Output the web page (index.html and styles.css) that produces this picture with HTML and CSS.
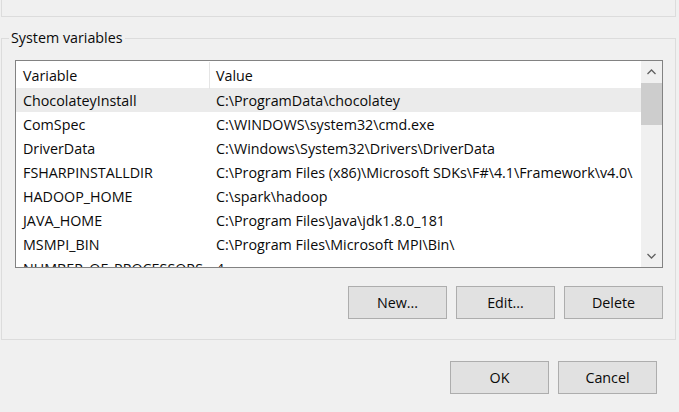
FILE: index.html
```html
<!DOCTYPE html>
<html>
<head>
<meta charset="utf-8">
<link rel="stylesheet" href="styles.css">
</head>
<body>
<div class="top-group"></div>
<div class="sys-group">
  <div class="legend">System variables</div>
  <div class="list">
    <div class="list-main">
      <div class="row header">
        <div class="c1">Variable</div>
        <div class="c2 hdr-value">Value</div>
      </div>
      <div class="row selected"><div class="c1">ChocolateyInstall</div><div class="c2">C:\ProgramData\chocolatey</div></div>
      <div class="row"><div class="c1">ComSpec</div><div class="c2">C:\WINDOWS\system32\cmd.exe</div></div>
      <div class="row"><div class="c1">DriverData</div><div class="c2">C:\Windows\System32\Drivers\DriverData</div></div>
      <div class="row"><div class="c1">FSHARPINSTALLDIR</div><div class="c2">C:\Program Files (x86)\Microsoft SDKs\F#\4.1\Framework\v4.0\</div></div>
      <div class="row"><div class="c1">HADOOP_HOME</div><div class="c2">C:\spark\hadoop</div></div>
      <div class="row"><div class="c1">JAVA_HOME</div><div class="c2">C:\Program Files\Java\jdk1.8.0_181</div></div>
      <div class="row"><div class="c1">MSMPI_BIN</div><div class="c2">C:\Program Files\Microsoft MPI\Bin\</div></div>
      <div class="row"><div class="c1">NUMBER_OF_PROCESSORS</div><div class="c2">4</div></div>
    </div>
    <div class="scrollbar">
      <div class="arrow"><svg width="9" height="6" viewBox="0 0 9 6"><polyline points="0.5,5 4.5,1 8.5,5" fill="none" stroke="#606060" stroke-width="1.3"/></svg></div>
      <div class="track"><div class="thumb"></div></div>
      <div class="arrow"><svg width="9" height="6" viewBox="0 0 9 6"><polyline points="0.5,1 4.5,5 8.5,1" fill="none" stroke="#606060" stroke-width="1.3"/></svg></div>
    </div>
  </div>
  <div class="btn-row">
    <button class="btn">New...</button>
    <button class="btn">Edit...</button>
    <button class="btn">Delete</button>
  </div>
</div>
<div class="dlg-row">
  <button class="btn">OK</button>
  <button class="btn">Cancel</button>
</div>
</body>
</html>
```
FILE: styles.css
```css
html, body {
  margin: 0;
  padding: 0;
  background: #f0f0f0;
  font-family: "Open Sans", "Noto Sans", sans-serif;
  font-size: 14.3px;
  color: #0a0a0a;
  width: 679px;
  height: 412px;
  overflow: hidden;
}
.top-group {
  margin-left: 1px;
  width: 673px;
  height: 16px;
  border: 1px solid #dcdcdc;
  border-top: none;
}
.sys-group {
  position: relative;
  margin-top: 21px;
  margin-left: 1px;
  width: 675px;
  border: 1px solid #dcdcdc;
  padding: 21px 12px 0 13px;
  box-sizing: border-box;
  height: 302px;
  display: flex;
  flex-direction: column;
}
.legend {
  position: absolute;
  left: 7px;
  top: -11px;
  padding: 0 2px;
  background: #f0f0f0;
  line-height: 20px;
}
.list {
  width: 648px;
  height: 208px;
  box-sizing: border-box;
  border: 1px solid #828282;
  background: #fff;
  display: flex;
  overflow: hidden;
}
.list-main {
  flex: 1;
  overflow: hidden;
}
.row {
  display: flex;
  height: 24px;
  align-items: center;
  white-space: nowrap;
}
.row.header {
  height: 27px;
  padding-top: 1px;
  box-sizing: border-box;
}
.row.selected {
  background: #ebebeb;
}
.c1 {
  width: 193px;
  padding-left: 7px;
  box-sizing: border-box;
  flex: none;
}
.c2 {
  padding-left: 7px;
  flex: none;
}
.hdr-value {
  border-left: 1px solid #e5e5e5;
  height: 27px;
  line-height: 27px;
  padding-left: 6px;
}
.scrollbar {
  width: 21px;
  flex: none;
  background: #f0f0f0;
  display: flex;
  flex-direction: column;
}
.arrow {
  height: 22px;
  display: flex;
  align-items: center;
  justify-content: center;
  flex: none;
}
.track {
  flex: 1;
}
.thumb {
  height: 42px;
  background: #cdcdcd;
}
.btn {
  width: 99px;
  height: 33px;
  box-sizing: border-box;
  background: #e1e1e1;
  border: 1px solid #adadad;
  font-family: inherit;
  font-size: 14.3px;
  color: #0a0a0a;
  padding: 0;
}
.btn-row {
  display: flex;
  justify-content: flex-end;
  gap: 9px;
  margin-top: 18px;
}
.dlg-row {
  display: flex;
  justify-content: flex-end;
  gap: 9px;
  margin-top: 21px;
  margin-right: 22px;
}
```
